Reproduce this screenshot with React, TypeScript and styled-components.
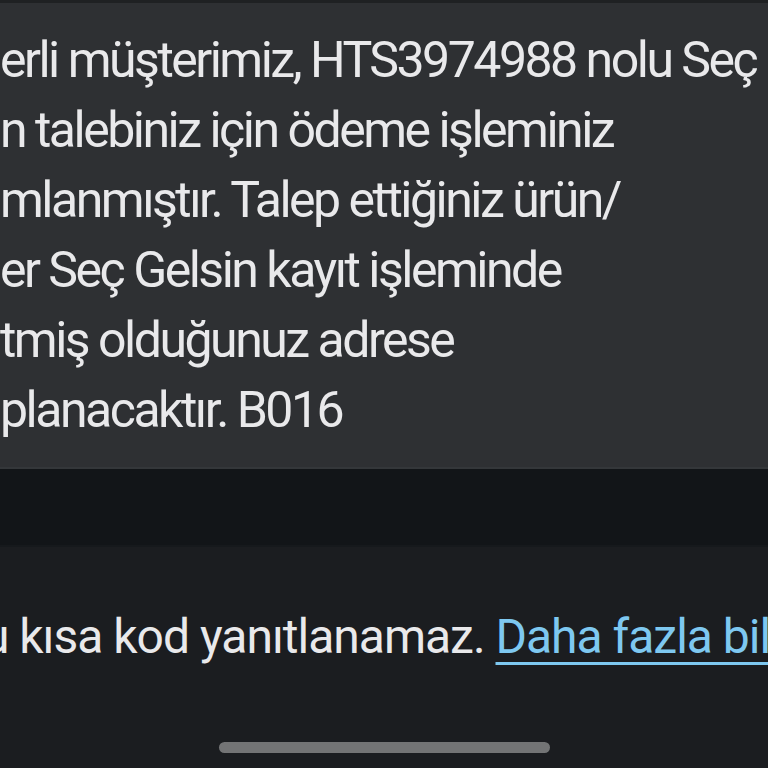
import React from 'react';
import styled, { createGlobalStyle } from 'styled-components';

const GlobalStyle = createGlobalStyle`
  html, body {
    margin: 0;
    padding: 0;
    background: #1b1d20;
  }
  body {
    font-family: Roboto, 'Noto Sans', 'Liberation Sans', sans-serif;
    -webkit-font-smoothing: antialiased;
  }
`;

const Screen = styled.div`
  width: 768px;
  height: 768px;
  overflow: hidden;
  display: flex;
  flex-direction: column;
  background: #1b1d20;
`;

const Bubble = styled.div`
  height: 467px;
  box-sizing: border-box;
  border-top: 3px solid #1f2123;
  background: #2e3033;
  padding-top: 22px;
  overflow: hidden;
`;

const Line = styled.div<{ $shift?: number }>`
  font-size: 50px;
  line-height: 70px;
  letter-spacing: -2.5px;
  color: #e9e9eb;
  white-space: nowrap;
  margin-left: ${(p) => p.$shift ?? 0}px;
`;

const Band = styled.div`
  height: 80px;
  background: #121518;
  border-top: 2px solid #34373a;
  border-bottom: 2px solid #16191c;
  box-sizing: border-box;
`;

const Footer = styled.div`
  flex: 1;
  display: flex;
  flex-direction: column;
  padding-top: 60px;
`;

const Notice = styled.div`
  font-size: 48px;
  line-height: 60px;
  letter-spacing: -1px;
  color: #e9e9eb;
  white-space: nowrap;
  margin-left: -46px;
`;

const Link = styled.a`
  color: #7ec8f0;
  text-decoration: underline;
  text-decoration-thickness: 3px;
  text-underline-offset: 9px;
`;

const HomeBar = styled.div`
  margin: auto auto 15px;
  width: 331px;
  height: 11px;
  border-radius: 6px;
  background: #737475;
`;

const lines: [string, number][] = [
  ['erli müşterimiz, HTS3974988 nolu Seç', 0],
  ['n talebiniz için ödeme işleminiz', 0],
  ['mlanmıştır. Talep ettiğiniz ürün/', 0],
  ['er Seç Gelsin kayıt işleminde', 0],
  ['tmiş olduğunuz adrese', 0],
  ['planacaktır. B016', 0],
];

export default function App() {
  return (
    <>
      <GlobalStyle />
      <Screen>
        <Bubble>
          {lines.map(([text, shift]) => (
            <Line key={text} $shift={shift}>
              {text}
            </Line>
          ))}
        </Bubble>
        <Band />
        <Footer>
          <Notice>
            Bu kısa kod yanıtlanamaz. <Link href="#">Daha fazla bilgi</Link>
          </Notice>
          <HomeBar />
        </Footer>
      </Screen>
    </>
  );
}
